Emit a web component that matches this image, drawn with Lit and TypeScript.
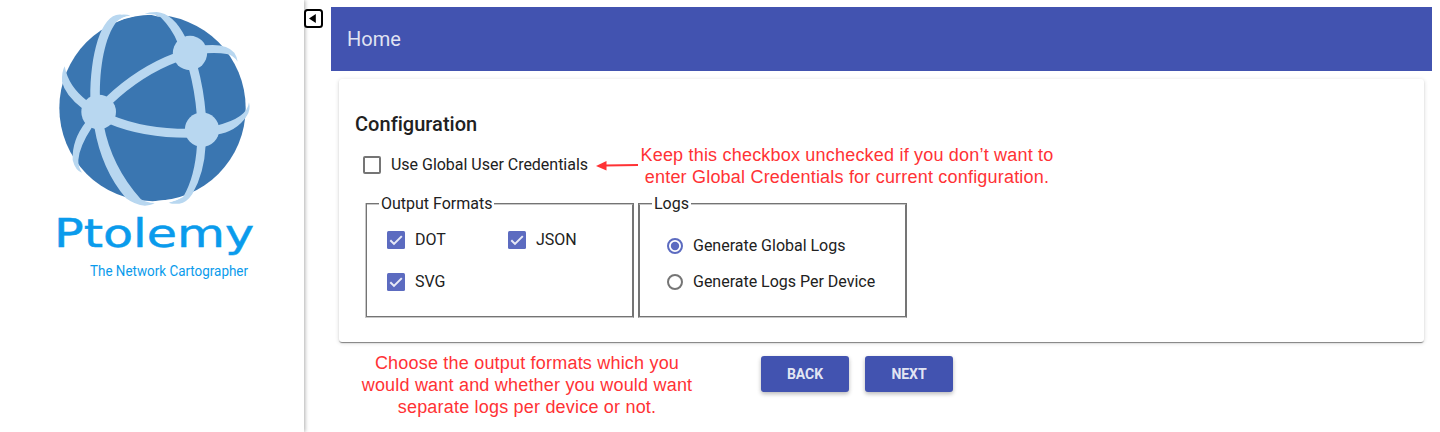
import { LitElement, html, css, svg } from "lit";
import { customElement, property } from "lit/decorators.js";

@customElement("check-item")
class CheckItem extends LitElement {
  @property({ type: Boolean }) checked = false;
  static styles = css`
    :host { display: flex; align-items: center; height: 24px; white-space: nowrap; }
    svg { display: block; width: 18px; height: 18px; margin-right: 10px; flex: none; }
  `;
  render() {
    return html`<svg viewBox="0 0 18 18">${this.checked
      ? svg`<rect width="18" height="18" rx="1.5" fill="#5c6bc0"></rect><path d="M3.3 9.2 7 12.9 14.8 5.1" fill="none" stroke="#e8eaf6" stroke-width="2"></path>`
      : svg`<rect x="1" y="1" width="16" height="16" rx="1" fill="none" stroke="#757575" stroke-width="2"></rect>`}</svg><slot></slot>`;
  }
}

@customElement("radio-item")
class RadioItem extends LitElement {
  @property({ type: Boolean }) checked = false;
  static styles = css`
    :host { display: flex; align-items: center; height: 24px; white-space: nowrap; }
    svg { display: block; width: 16px; height: 16px; margin-right: 10px; flex: none; }
  `;
  render() {
    return html`<svg viewBox="0 0 16 16"><circle cx="8" cy="8" r="7" fill="none" stroke=${this.checked ? "#5c6bc0" : "#757575"} stroke-width="2"></circle>${this.checked ? svg`<circle cx="8" cy="8" r="4.2" fill="#5c6bc0"></circle>` : null}</svg><slot></slot>`;
  }
}

@customElement("brand-logo")
class BrandLogo extends LitElement {
  static styles = css`
    :host { display: block; }
    svg { display: block; width: 230px; height: 290px; }
    .name { font-family: "DejaVu Sans", sans-serif; font-size: 38.5px; stroke: #0a9bec; stroke-width: .5px; }
    .tag { font-family: "Roboto", sans-serif; font-size: 15px; }
  `;
  render() {
    return html`<svg viewBox="0 0 230 290">
      <g transform="scale(.33333)">
        <circle cx="337.5" cy="324" r="279.5" fill="#3a76b1"></circle>
        <g fill="#b8d7f0">
          <circle cx="176" cy="336" r="52"></circle>
          <circle cx="450" cy="159" r="51.5"></circle>
          <circle cx="486" cy="389" r="51.5"></circle>
          <path d="M151 295C150 160 185 35 245 44Q262 43 271 47Q245 50 229 66C195 110 178 200 180 295Z"></path>
          <path d="M436 112Q400 40 350 36Q325 36 314 42Q345 40 362 52Q395 85 413 128Z"></path>
          <path d="M494 136Q560 129 583 158Q592 172 593 185Q580 165 560 162Q535 157 494 160Z"></path>
          <path d="M528 377Q622 355 627 307Q633 330 620 348Q590 395 528 404Z"></path>
          <path d="M471 435Q465 530 430 590Q410 602 385 608Q400 613 418 611Q440 608 457 582Q493 520 497 435Z"></path>
          <path d="M163 382Q185 510 258 595Q285 615 315 617Q335 615 344 609Q318 608 302 597Q215 500 191 375Z"></path>
          <path d="M142 303Q85 260 74 199Q65 215 66 245Q75 285 128 326Z"></path>
          <path d="M138 365Q95 420 98 480Q106 512 126 518Q114 500 115 480Q118 440 156 382Z"></path>
        </g>
        <g fill="none" stroke="#b8d7f0" stroke-width="27">
          <path d="M205 303Q300 213 410 172"></path>
          <path d="M459 200Q478 270 484 345"></path>
          <path d="M210 358Q310 400 445 400"></path>
        </g>
        <g fill="#fff">
          <path d="M228 67Q245 50 271 47L285 49Q252 54 228 67Z"></path>
          <path d="M314 42Q345 40 362 52L335 45Z"></path>
          <path d="M385 608Q410 602 430 590L400 598L340 604Z"></path>
        </g>
      </g>
      <g fill="#0a9bec">
        <text class="name" x="14" y="246.5" textLength="200" lengthAdjust="spacingAndGlyphs">Ptolemy</text>
        <text class="tag" x="50" y="276" textLength="158" lengthAdjust="spacingAndGlyphs">The Network Cartographer</text>
      </g>
    </svg>`;
  }
}

@customElement("app-root")
class AppRoot extends LitElement {
  static styles = css`
    :host { display: flex; position: relative; height: 432px; overflow: hidden; background: #fff; font: 16px/24px Roboto, sans-serif; color: #212121; }
    * { box-sizing: border-box; }
    .side { width: 304px; flex: none; padding-left: 40px; box-shadow: 1px 0 4px rgba(0,0,0,.32); }
    .toggle { flex: none; margin: 9px 8px 0 0; width: 19px; height: 19px; }
    .toggle svg { display: block; }
    .main { flex: 1; min-width: 0; padding: 7px 8px 0 0; }
    .bar { height: 64px; background: #4253b0; color: rgba(255,255,255,.85); padding: 0 16px; display: flex; align-items: center; font-size: 20px; }
    .card { margin: 8px 8px 0; height: 263px; padding: 33px 16px 0; border-radius: 3px; background: #fff; box-shadow: 0 2px 1px -1px rgba(0,0,0,.3), 0 1px 1px rgba(0,0,0,.2), 0 1px 4px rgba(0,0,0,.16); }
    h2 { font-size: 20px; line-height: 24px; font-weight: 500; margin: 0 0 17px; letter-spacing: .03px; }
    .cred { margin-left: 8px; letter-spacing: -.02px; }
    .sets { display: flex; gap: 4px; margin: 15px 0 0 10px; }
    fieldset { width: 269px; height: 126px; margin: 0; min-width: 0; border: 2px groove #c8c8c8; border-right: 2px solid #757575; border-left: 2px solid #757575; letter-spacing: -.01px; }
    legend { padding: 0 2px; }
    .formats { padding: 12px 0 0 20px; border-left: 2px ridge #c8c8c8; }
    .formats legend { margin-left: -8px; }
    .formats .grid { display: grid; grid-template-columns: 121px auto; row-gap: 18px; }
    .logs { padding: 18px 0 0 27px; }
    .logs legend { margin-left: -15px; }
    .logs .list { display: flex; flex-direction: column; gap: 12px; }
    .actions { display: flex; gap: 16px; margin: 14px 0 0 430px; }
    button { width: 88px; height: 36px; padding: 0; border: 0; border-radius: 3px; background: #4253b0; color: rgba(255,255,255,.87); font: 700 14px/36px Roboto, sans-serif; letter-spacing: -.05px; box-shadow: 0 2px 4px rgba(0,0,0,.28); }
    .note { position: absolute; color: #ff3235; font: 18px/22px "Liberation Sans", sans-serif; letter-spacing: .2px; text-align: center; white-space: nowrap; }
    .note-cred { left: 640px; top: 144px; width: 414px; }
    .note-out { left: 361px; top: 352px; width: 332px; }
    .arrow { position: absolute; left: 595px; top: 158px; }
  `;
  render() {
    return html`
      <div class="side"><brand-logo></brand-logo></div>
      <div class="toggle"><svg width="19" height="19"><rect x="1" y="1" width="17" height="17" rx="2.5" fill="#fff" stroke="#000" stroke-width="2"></rect><path d="M5 9.5 11.8 5v9z"></path></svg></div>
      <div class="main">
        <div class="bar">Home</div>
        <div class="card">
          <h2>Configuration</h2>
          <check-item class="cred">Use Global User Credentials</check-item>
          <div class="sets">
            <fieldset class="formats">
              <legend>Output Formats</legend>
              <div class="grid">
                <check-item checked>DOT</check-item>
                <check-item checked>JSON</check-item>
                <check-item checked>SVG</check-item>
              </div>
            </fieldset>
            <fieldset class="logs">
              <legend>Logs</legend>
              <div class="list">
                <radio-item checked>Generate Global Logs</radio-item>
                <radio-item>Generate Logs Per Device</radio-item>
              </div>
            </fieldset>
          </div>
        </div>
        <div class="actions"><button>BACK</button><button>NEXT</button></div>
      </div>
      <svg class="arrow" width="44" height="16"><path d="M10 7.5 43 7" stroke="#ff3235" stroke-width="2"></path><path d="M1 8 11.5 3v9.5z" fill="#ff3235"></path></svg>
      <div class="note note-cred">Keep this checkbox unchecked if you don’t want to<br>enter Global Credentials for current configuration.</div>
      <div class="note note-out">Choose the output formats which you<br>would want and whether you would want<br>separate logs per device or not.</div>
    `;
  }
}
